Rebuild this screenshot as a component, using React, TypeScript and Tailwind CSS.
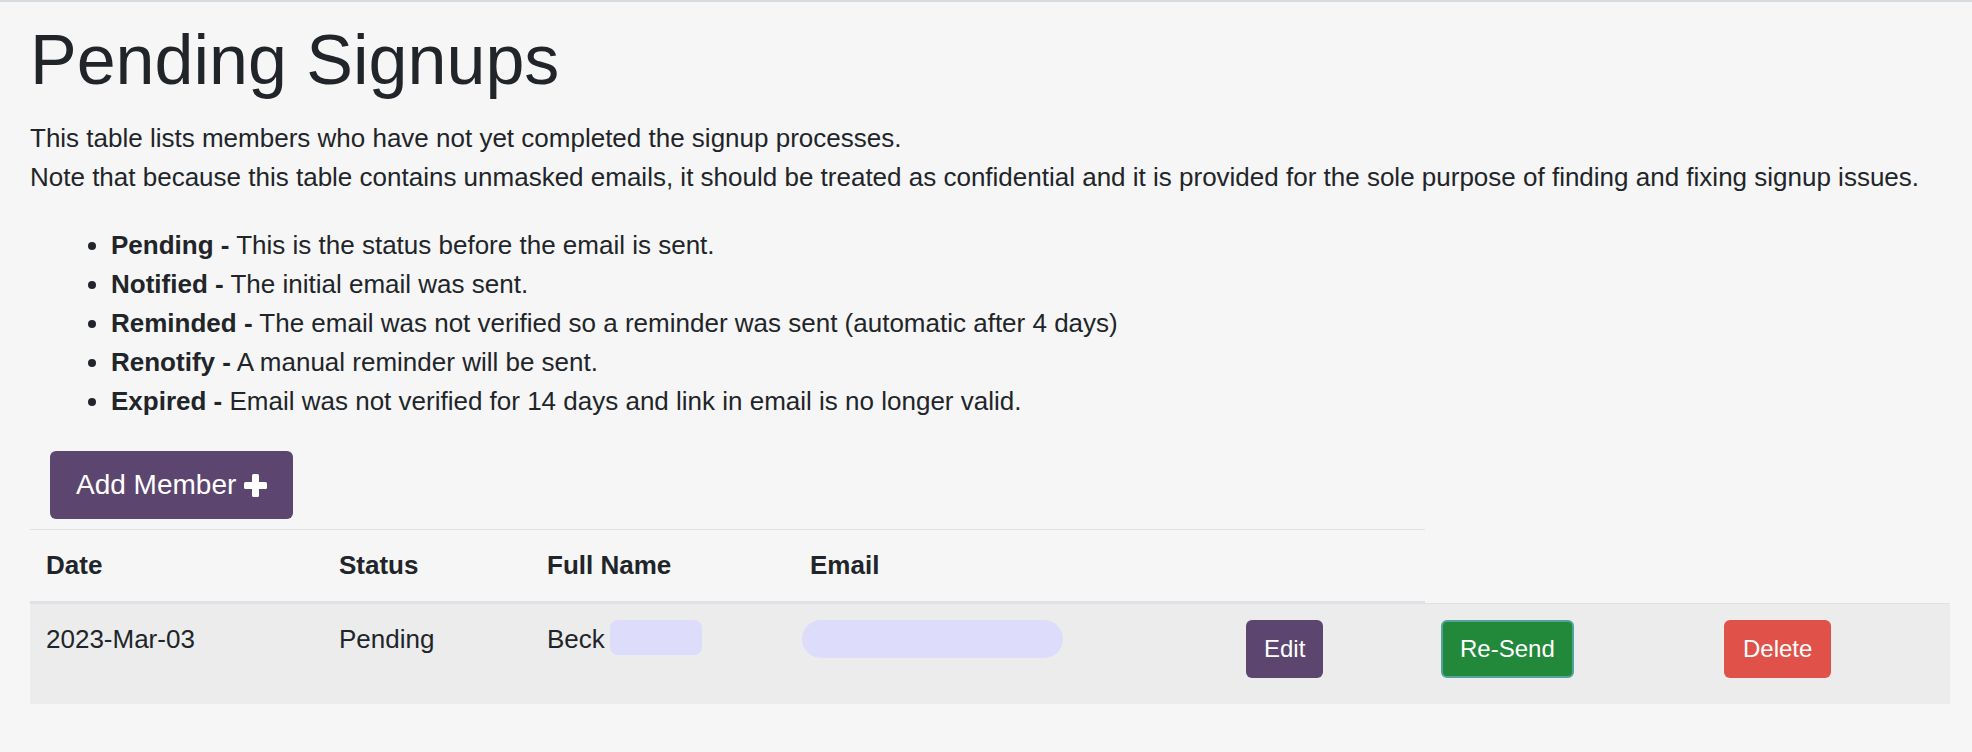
import React from "react";

const PlusIcon = () => (
  <svg width="23" height="23" viewBox="0 0 23 23" className="inline-block" aria-hidden="true">
    <rect x="0" y="8" width="23" height="7" rx="1.5" fill="white" />
    <rect x="8" y="0" width="7" height="23" rx="1.5" fill="white" />
  </svg>
);

const statuses: [string, string][] = [
  ["Pending -", "This is the status before the email is sent."],
  ["Notified -", "The initial email was sent."],
  ["Reminded -", "The email was not verified so a reminder was sent (automatic after 4 days)"],
  ["Renotify -", "A manual reminder will be sent."],
  ["Expired -", "Email was not verified for 14 days and link in email is no longer valid."],
];

export default function App() {
  return (
    <div
      className="min-h-screen bg-[#f6f6f6] border-t-2 border-[#d6dbe0] text-[#212529]"
      style={{ fontFamily: '"Liberation Sans", Arial, Helvetica, sans-serif' }}
    >
      <div className="pl-[30px]">
        <h1 className="mt-[16px] mb-[17px] text-[70px] leading-[84px] font-normal">Pending Signups</h1>
        <div className="text-[26px] leading-[39px] whitespace-nowrap">
          <div>This table lists members who have not yet completed the signup processes.</div>
          <div>
            Note that because this table contains unmasked emails, it should be treated as confidential and it is
            provided for the sole purpose of finding and fixing signup issues.
          </div>
        </div>
        <ul className="mt-[29px] list-disc pl-[81px] text-[26px] leading-[39px]">
          {statuses.map(([label, text]) => (
            <li key={label}>
              <span className="font-bold">{label}</span> {text}
            </li>
          ))}
        </ul>
        <div className="mt-[30px] ml-[20px]">
          <button className="h-[68px] px-[26px] rounded-[6px] bg-[#5c466f] text-white text-[28px] flex items-center gap-[8px]">
            <span>Add Member</span>
            <PlusIcon />
          </button>
        </div>
        <table className="mt-[10px] w-[1920px] table-fixed border-separate border-spacing-0 text-[26px] leading-[39px] text-left">
          <colgroup>
            <col className="w-[293px]" />
            <col className="w-[208px]" />
            <col className="w-[263px]" />
            <col className="w-[436px]" />
            <col className="w-[195px]" />
            <col className="w-[283px]" />
            <col className="w-[242px]" />
          </colgroup>
          <thead>
            <tr>
              {["Date", "Status", "Full Name", "Email", ""].map((h, i) => (
                <th
                  key={i}
                  className="px-[16px] py-[16px] font-bold align-bottom border-t border-b-2 border-[#dee2e6]"
                >
                  {h}
                </th>
              ))}
            </tr>
          </thead>
          <tbody>
            <tr className="bg-[#ececec]">
              <td className="px-[16px] pt-[16px] pb-[26px] align-top border-t border-[#dee2e6]">2023-Mar-03</td>
              <td className="px-[16px] pt-[16px] pb-[26px] align-top border-t border-[#dee2e6]">Pending</td>
              <td className="px-[16px] pt-[16px] pb-[26px] align-top border-t border-[#dee2e6]">
                <span>Beck</span>
                <span className="inline-block align-top ml-[5px] w-[92px] h-[35px] rounded-[8px] bg-[#dedcfb]"></span>
              </td>
              <td className="px-[16px] pt-[16px] pb-[26px] align-top border-t border-[#dee2e6]">
                <span className="block -ml-[8px] w-[261px] h-[38px] rounded-full bg-[#dedcfb]"></span>
              </td>
              <td className="px-[16px] pt-[16px] pb-[26px] align-top border-t border-[#dee2e6]">
                <button className="h-[58px] px-[18px] rounded-[6px] bg-[#5c466f] text-white text-[24px] leading-[36px]">
                  Edit
                </button>
              </td>
              <td className="px-[16px] pt-[16px] pb-[26px] align-top border-t border-[#dee2e6]">
                <button className="h-[58px] px-[17px] rounded-[6px] bg-[#22883a] border-2 border-[#53a39c] text-white text-[24px] leading-[36px]">
                  Re-Send
                </button>
              </td>
              <td className="px-[16px] pt-[16px] pb-[26px] align-top border-t border-[#dee2e6]">
                <button className="h-[58px] px-[19px] rounded-[6px] bg-[#e05149] text-white text-[24px] leading-[36px]">
                  Delete
                </button>
              </td>
            </tr>
          </tbody>
        </table>
      </div>
    </div>
  );
}
